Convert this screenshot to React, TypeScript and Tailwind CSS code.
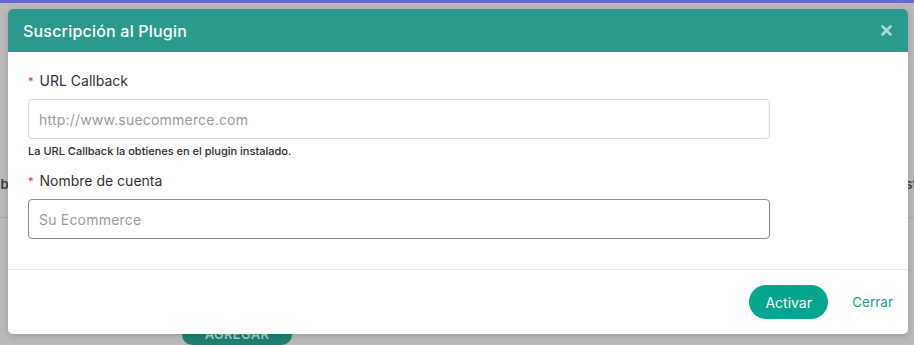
import React from "react";

const font = { fontFamily: "Inter, 'Noto Sans', sans-serif" };

function Field({
  label,
  placeholder,
  hint,
  dark,
}: {
  label: string;
  placeholder: string;
  hint?: string;
  dark?: boolean;
}) {
  return (
    <div className="flex flex-col">
      <label className="flex items-center gap-[6px] text-[14px] leading-[20px] text-[#2f2f33]">
        <span className="text-[11px] text-[#c0395a]">*</span>
        {label}
      </label>
      <input
        placeholder={placeholder}
        className={`mt-[8px] h-[40px] w-[742px] rounded-[4px] border bg-white px-[10px] text-[14px] tracking-[0.2px] text-[#333] outline-none placeholder:text-[#9a9a9a] ${
          dark ? "border-[#8a8a8a]" : "border-[#d9d9d9]"
        }`}
      />
      {hint && (
        <p className="mt-[5px] text-[11px] font-medium leading-[14px] text-[#2a2a2a]">
          {hint}
        </p>
      )}
    </div>
  );
}

export default function App() {
  return (
    <div
      className="relative h-[345px] w-[914px] overflow-hidden bg-[#b9b9b9]"
      style={font}
    >
      {/* page behind the overlay */}
      <div className="h-[3px] bg-[#6b67c4]" />
      <div className="flex h-[342px] flex-col">
        <div className="mt-[172px] flex h-[20px] items-center justify-between text-[13px] font-semibold text-[#3a3a3a]">
          <span className="-ml-[7px]">ab</span>
          <span className="-mr-[3px]">st</span>
        </div>
        <div className="mt-[22px] h-[1px] bg-[#a6a6a6]" />
        <div className="mt-[107px] ml-[182px] flex h-[30px] w-[110px] items-center justify-center rounded-full bg-[#1d7f71] text-[13px] font-semibold tracking-wide text-[#a9cfc9]">
          AGREGAR
        </div>
      </div>

      {/* modal */}
      <div className="absolute left-[8px] top-[9px] flex h-[325px] w-[900px] flex-col overflow-hidden rounded-[5px] bg-white shadow-[0_2px_6px_rgba(0,0,0,0.15)]">
        <div className="flex h-[43px] shrink-0 items-center justify-between bg-[#2b9a8c] pl-[15px] pr-[16px]">
          <h2 className="text-[16px] font-medium tracking-[0.2px] text-white">
            Suscripción al Plugin
          </h2>
          <svg width="11" height="11" viewBox="0 0 11 11">
            <path
              d="M1.5 1.5 L9.5 9.5 M9.5 1.5 L1.5 9.5"
              stroke="#a6dcd4"
              strokeWidth="2.6"
              strokeLinecap="round"
            />
          </svg>
        </div>
        <div className="flex flex-col gap-[13px] px-[20px] pt-[19px]">
          <Field
            label="URL Callback"
            placeholder="http://www.suecommerce.com"
            hint="La URL Callback la obtienes en el plugin instalado."
          />
          <Field label="Nombre de cuenta" placeholder="Su Ecommerce" dark />
        </div>
        <div className="mt-[30px] h-[1px] bg-[#e3e6e6]" />
        <div className="flex items-center justify-end gap-[24px] pr-[15px] pt-[15px]">
          <button className="h-[34px] w-[79px] rounded-full bg-[#05a58e] text-[14px] text-white">
            Activar
          </button>
          <button className="text-[13.5px] text-[#1f9c8b]">Cerrar</button>
        </div>
      </div>
    </div>
  );
}
